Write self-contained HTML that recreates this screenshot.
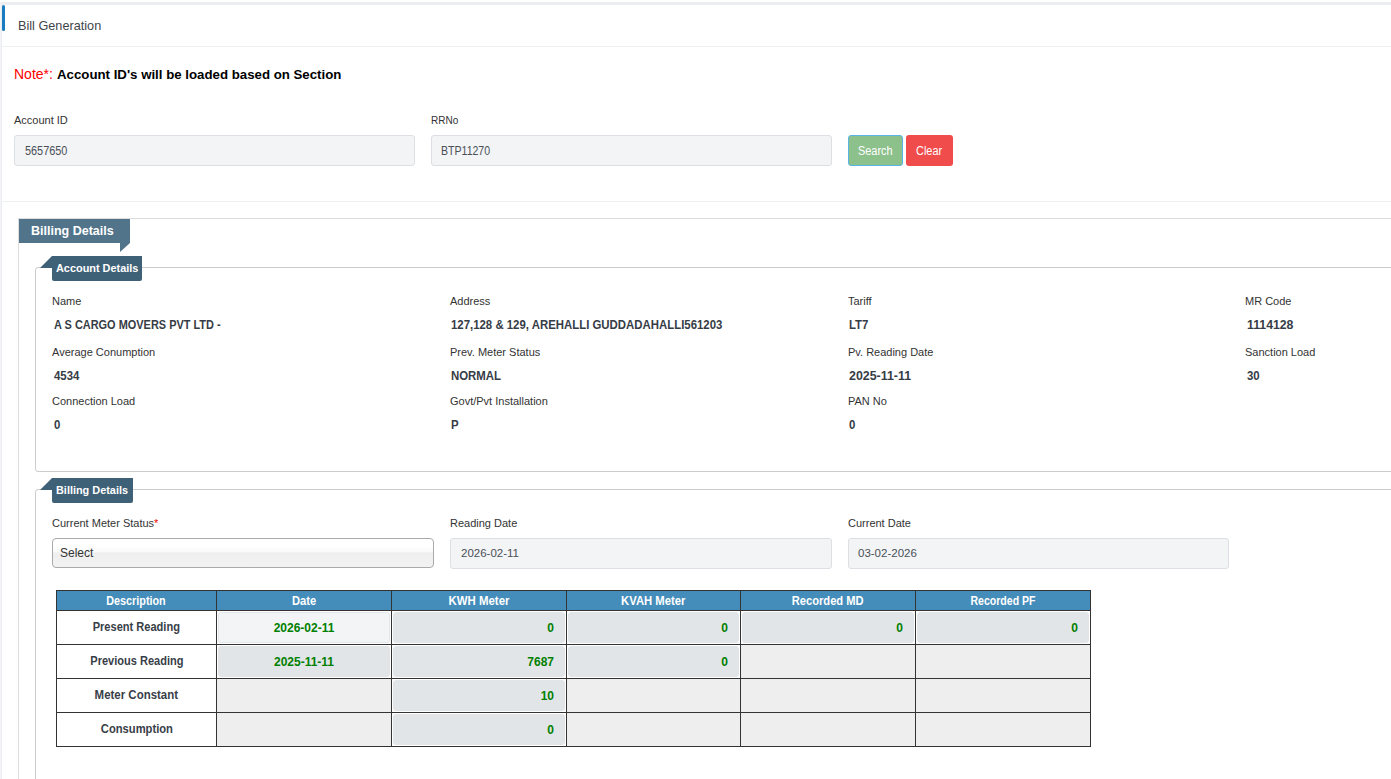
<!DOCTYPE html>
<html><head><meta charset="utf-8">
<style>
*{box-sizing:border-box;margin:0;padding:0}
html,body{width:1391px;height:779px;overflow:hidden;background:#fff}
body{position:relative;font-family:"Liberation Sans",sans-serif;color:#333}
.a{position:absolute}
.t{position:absolute;white-space:nowrap;line-height:1}
.inp{position:absolute;background:#f3f4f6;border:1px solid #dcdfe3;border-radius:3px}
.lbl{font-size:11px;color:#333}
.val{font-size:12px;font-weight:bold;color:#363c46;transform:scaleX(.95);transform-origin:0 0}
table{position:absolute;left:56px;top:590px;border-collapse:collapse;table-layout:fixed}
td,th{border:1px solid #333;padding:0;text-align:center;font-size:13px;font-weight:bold;line-height:1}
.d{display:inline-block;white-space:nowrap}
th{font-size:12px}
th{background:#448cb9;color:#fff;height:20px}
td{height:34px;color:#383e48;padding-bottom:2px}
td.e{background:#eee}
td .ro{position:relative;top:-0.5px;margin:1px 1px -2px 1px;height:31px;border-radius:3px;background:#e2e5e8;border:1px solid #e2e5e8;color:#008000;font-size:12px;line-height:30px;text-align:right;padding-right:10px}
td .ro.l{background:#f3f4f6;border-color:#e3e6ea;text-align:center;padding:0}
td .ro.c{text-align:center;padding:0}
</style></head><body>
<!-- page frame -->
<div class="a" style="left:0;top:2px;width:1391px;height:3px;background:#ebedf0"></div>
<div class="a" style="left:0;top:2px;width:1px;height:777px;background:#f3f4f6"></div><div class="a" style="left:1px;top:2px;width:1px;height:777px;background:#ebedf0"></div>
<div class="a" style="left:2px;top:5px;width:3px;height:26px;background:#1a7cc0;border-radius:2px"></div>
<div class="t" style="left:18px;top:20px;font-size:12.7px;color:#3f454b">Bill Generation</div>
<div class="a" style="left:2px;top:46px;width:1389px;height:1px;background:#eef0f2"></div>

<div class="t" style="left:14px;top:67px;font-size:14px;color:#f00">Note*:</div><div class="t" style="left:57px;top:68px;font-size:13.25px;font-weight:bold;color:#000">Account ID's will be loaded based on Section</div>

<div class="t lbl" style="left:14px;top:115px">Account ID</div>
<div class="t lbl" style="left:431px;top:115px;transform:scaleX(.91);transform-origin:0 0">RRNo</div>
<div class="inp" style="left:14px;top:135px;width:401px;height:31px"></div>
<div class="t" style="left:25px;top:145px;font-size:12px;color:#495057;transform:scaleX(.908);transform-origin:0 0">5657650</div>
<div class="inp" style="left:431px;top:135px;width:401px;height:31px"></div>
<div class="t" style="left:441px;top:145px;font-size:12px;color:#495057;transform:scaleX(.88);transform-origin:0 0">BTP11270</div>
<div class="a" style="left:848px;top:135px;width:55px;height:31px;background:#8dc18c;border:1px solid #5ab4e6;border-radius:3px"></div>
<div class="t" style="left:858px;top:145px;font-size:12px;color:#fff;transform:scaleX(.91);transform-origin:0 0">Search</div>
<div class="a" style="left:906px;top:135px;width:47px;height:31px;background:#f04c4c;border-radius:3px"></div>
<div class="t" style="left:916px;top:145px;font-size:12px;color:#fff;transform:scaleX(.91);transform-origin:0 0">Clear</div>

<div class="a" style="left:2px;top:201px;width:1389px;height:1px;background:#eef0f3;border-top-left-radius:3px"></div>

<!-- outer billing fieldset -->
<div class="a" style="left:18px;top:218px;width:1400px;height:600px;border:1px solid #ddd"></div>
<div class="a" style="left:19px;top:219px;width:111px;height:24px;background:#52748a"></div>
<svg class="a" style="left:120px;top:243px" width="10" height="10"><polygon points="0,0 10,0 0,9" fill="#52748a"/></svg>
<div class="t" style="left:31px;top:225px;font-size:12.5px;font-weight:bold;color:#fff">Billing Details</div>

<!-- account details fieldset -->
<div class="a" style="left:35px;top:267px;width:1400px;height:205px;border:1px solid #ccc;border-radius:3px"></div>
<div class="a" style="left:52px;top:256px;width:90px;height:25px;background:#3f6178;border-radius:0 0 2px 2px"></div>
<svg class="a" style="left:40px;top:256px" width="12" height="12"><polygon points="12,0 12,12 0,12" fill="#3f6178"/></svg>
<div class="t" style="left:56px;top:263px;font-size:10.9px;font-weight:bold;color:#fff">Account Details</div>

<div class="t lbl" style="left:52px;top:296px">Name</div>
<div class="t lbl" style="left:450px;top:296px">Address</div>
<div class="t lbl" style="left:848px;top:296px">Tariff</div>
<div class="t lbl" style="left:1245px;top:296px">MR Code</div>
<div class="t val" style="left:54px;top:319px;transform:scaleX(.912)">A S CARGO MOVERS PVT LTD -</div>
<div class="t val" style="left:451px;top:319px">127,128 &amp; 129, AREHALLI GUDDADAHALLI561203</div>
<div class="t val" style="left:849px;top:319px">LT7</div>
<div class="t val" style="left:1247px;top:319px;transform:scaleX(1.023)">1114128</div>

<div class="t lbl" style="left:52px;top:347px">Average Conumption</div>
<div class="t lbl" style="left:450px;top:347px">Prev. Meter Status</div>
<div class="t lbl" style="left:848px;top:347px">Pv. Reading Date</div>
<div class="t lbl" style="left:1245px;top:347px">Sanction Load</div>
<div class="t val" style="left:54px;top:370px">4534</div>
<div class="t val" style="left:451px;top:370px">NORMAL</div>
<div class="t val" style="left:849px;top:370px;transform:scaleX(1.033)">2025-11-11</div>
<div class="t val" style="left:1247px;top:370px">30</div>

<div class="t lbl" style="left:52px;top:396px">Connection Load</div>
<div class="t lbl" style="left:450px;top:396px">Govt/Pvt Installation</div>
<div class="t lbl" style="left:848px;top:396px">PAN No</div>
<div class="t val" style="left:54px;top:419px">0</div>
<div class="t val" style="left:451px;top:419px">P</div>
<div class="t val" style="left:849px;top:419px">0</div>

<!-- billing details fieldset -->
<div class="a" style="left:35px;top:489px;width:1400px;height:400px;border:1px solid #ccc;border-radius:3px"></div>
<div class="a" style="left:52px;top:478px;width:81px;height:25px;background:#3f6178;border-radius:0 0 2px 2px"></div>
<svg class="a" style="left:40px;top:478px" width="12" height="12"><polygon points="12,0 12,12 0,12" fill="#3f6178"/></svg>
<div class="t" style="left:56px;top:485px;font-size:10.9px;font-weight:bold;color:#fff">Billing Details</div>

<div class="t lbl" style="left:52px;top:518px">Current Meter Status<span style="color:#e00">*</span></div>
<div class="t lbl" style="left:450px;top:518px">Reading Date</div>
<div class="t lbl" style="left:848px;top:518px">Current Date</div>
<div class="a" style="left:52px;top:538px;width:382px;height:30px;border:1px solid #aaa;border-radius:4px;background:linear-gradient(#fff 0%,#fff 22%,#fafafa 45%,#efefef 50%,#f2f2f2 100%)"></div>
<div class="t" style="left:60px;top:547px;font-size:12px;color:#333">Select</div>
<div class="inp" style="left:450px;top:538px;width:382px;height:31px"></div>
<div class="t" style="left:461px;top:548px;font-size:11.5px;color:#495057">2026-02-11</div>
<div class="inp" style="left:848px;top:538px;width:381px;height:31px"></div>
<div class="t" style="left:858px;top:548px;font-size:11.5px;color:#495057">03-02-2026</div>

<table>
<colgroup><col style="width:160px"><col style="width:175px"><col style="width:175px"><col style="width:174px"><col style="width:175px"><col style="width:175px"></colgroup>
<tr><th><span class="d" style="transform:scaleX(.9)">Description</span></th><th><span class="d" style="transform:scaleX(.93)">Date</span></th><th><span class="d" style="transform:scaleX(.95)">KWH Meter</span></th><th><span class="d" style="transform:scaleX(.94)">KVAH Meter</span></th><th><span class="d" style="transform:scaleX(.93)">Recorded MD</span></th><th><span class="d" style="transform:scaleX(.88)">Recorded PF</span></th></tr>
<tr><td><span class="d" style="transform:scaleX(.851)">Present Reading</span></td><td><div class="ro l">2026-02-11</div></td><td><div class="ro">0</div></td><td><div class="ro">0</div></td><td><div class="ro">0</div></td><td><div class="ro">0</div></td></tr>
<tr><td><span class="d" style="transform:scaleX(.849)">Previous Reading</span></td><td><div class="ro c">2025-11-11</div></td><td><div class="ro">7687</div></td><td><div class="ro">0</div></td><td class="e"></td><td class="e"></td></tr>
<tr><td><span class="d" style="transform:scaleX(.882)">Meter Constant</span></td><td class="e"></td><td><div class="ro">10</div></td><td class="e"></td><td class="e"></td><td class="e"></td></tr>
<tr><td><span class="d" style="transform:scaleX(.86)">Consumption</span></td><td class="e"></td><td><div class="ro">0</div></td><td class="e"></td><td class="e"></td><td class="e"></td></tr>
</table>
</body></html>
